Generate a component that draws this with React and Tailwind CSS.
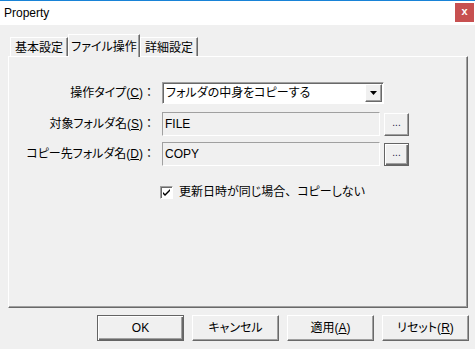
import React from 'react';

const raised =
  "bg-[#f0f0f0] border border-t-white border-l-white border-r-[#696969] border-b-[#696969] shadow-[inset_-1px_-1px_0_#a0a0a0]";
const defaultBtn =
  "bg-[#f0f0f0] border border-[#646464] shadow-[inset_1px_1px_0_#fff,inset_-1px_-1px_0_#696969,inset_-2px_-2px_0_#a0a0a0]";

function Tab({ label, active }) {
  if (active) {
    return (
      <div className="relative z-10 -mb-px h-[23px] w-[72px] flex items-start justify-center pt-[3px] bg-[#f0f0f0] border-t border-l border-t-white border-l-white border-r border-r-[#696969] shadow-[inset_-1px_0_0_#a0a0a0]">
        {label}
      </div>
    );
  }
  return (
    <div className="h-[19px] w-[58px] flex items-start justify-center pt-[1px] bg-[#f0f0f0] border-t border-l border-t-white border-l-white border-r border-r-[#696969] shadow-[inset_-1px_0_0_#a0a0a0]">
      {label}
    </div>
  );
}

function Label({ text, hot }) {
  return (
    <div className="w-[146px] text-right whitespace-nowrap">
      {text}(<u>{hot}</u>)<span className="[font-feature-settings:normal]">：</span>
    </div>
  );
}

function BrowseButton({ focused }) {
  return (
    <div className={`ml-[4px] w-[25px] h-[23px] flex items-center justify-center ${focused ? defaultBtn : raised}`}>
      <span className="text-[10px] leading-none -mt-[2px] text-[#1a1a40]">...</span>
    </div>
  );
}

function ReadField({ value }) {
  return (
    <div className="w-[218px] h-[24px] flex items-center pl-[2px] bg-[#f0f0f0] border border-t-[#a0a0a0] border-l-[#a0a0a0] border-r-white border-b-white">
      {value}
    </div>
  );
}

export default function App() {
  return (
    <div className="w-[475px] h-[349px] bg-[#f0f0f0] text-[12px] text-black font-['Liberation_Sans','Noto_Sans_CJK_JP',sans-serif] [font-feature-settings:'palt'] flex flex-col overflow-hidden">
      {/* title bar */}
      <div className="h-[25px] bg-white border-t border-[#1883d7] flex items-start justify-between">
        <span className="pl-[4px] pt-[4px] leading-[16px]">Property</span>
        <div className="mt-[2px] mr-[1px] w-[19px] h-[19px] bg-[#c75050] flex items-center justify-center">
          <span className="text-white text-[11px] font-bold leading-none -mt-[2px]">x</span>
        </div>
      </div>

      {/* tabs */}
      <div className="mt-[9px] ml-[10px] flex items-end h-[22px]">
        <Tab label="基本設定" />
        <Tab label="ファイル操作" active />
        <Tab label="詳細設定" />
      </div>

      {/* panel */}
      <div className="ml-[8px] w-[460px] h-[252px] border border-t-white border-l-white border-r-[#696969] border-b-[#696969] shadow-[inset_-1px_-1px_0_#a0a0a0] flex flex-col">
        <div className="mt-[25px] flex items-center">
          <Label text="操作タイプ" hot="C" />
          <div className="ml-[7px] w-[222px] h-[22px] bg-white border border-t-[#a0a0a0] border-l-[#a0a0a0] border-r-white border-b-white shadow-[inset_1px_1px_0_#696969] flex items-center">
            <span className="pl-[3px] flex-1">フォルダの中身をコピーする</span>
            <div className={`w-[17px] h-[18px] mr-[1px] flex items-center justify-center ${raised}`}>
              <svg width="7" height="4" viewBox="0 0 7 4">
                <path d="M0 0h7L3.5 4z" fill="#000" />
              </svg>
            </div>
          </div>
        </div>

        <div className="mt-[8px] flex items-center">
          <Label text="対象フォルダ名" hot="S" />
          <div className="ml-[7px] flex items-center">
            <ReadField value="FILE" />
            <BrowseButton />
          </div>
        </div>

        <div className="mt-[6px] flex items-center">
          <Label text="コピー先フォルダ名" hot="D" />
          <div className="ml-[7px] flex items-center">
            <ReadField value="COPY" />
            <BrowseButton focused />
          </div>
        </div>

        <div className="mt-[17px] ml-[151px] flex items-center gap-[6px]">
          <div className="w-[13px] h-[13px] bg-white border border-t-[#a0a0a0] border-l-[#a0a0a0] border-r-white border-b-white shadow-[inset_1px_1px_0_#696969] flex items-center justify-center">
            <svg width="9" height="9" viewBox="0 0 9 9">
              <path d="M1 4l2 2 5-5v2L3 8 1 6z" fill="#000" />
            </svg>
          </div>
          <span>
            更新日時が同じ場合<span className="[font-feature-settings:normal]">、</span>コピーしない
          </span>
        </div>
      </div>

      {/* buttons */}
      <div className="mt-[7px] pr-[6px] flex justify-end gap-[8px]">
        <div className={`w-[87px] h-[26px] flex items-center justify-center ${defaultBtn}`}>OK</div>
        <div className={`w-[87px] h-[26px] flex items-center justify-center ${raised}`}>キャンセル</div>
        <div className={`w-[87px] h-[26px] flex items-center justify-center ${raised}`}>
          適用(<u>A</u>)
        </div>
        <div className={`w-[87px] h-[26px] flex items-center justify-center ${raised}`}>
          リセット(<u>R</u>)
        </div>
      </div>
    </div>
  );
}
